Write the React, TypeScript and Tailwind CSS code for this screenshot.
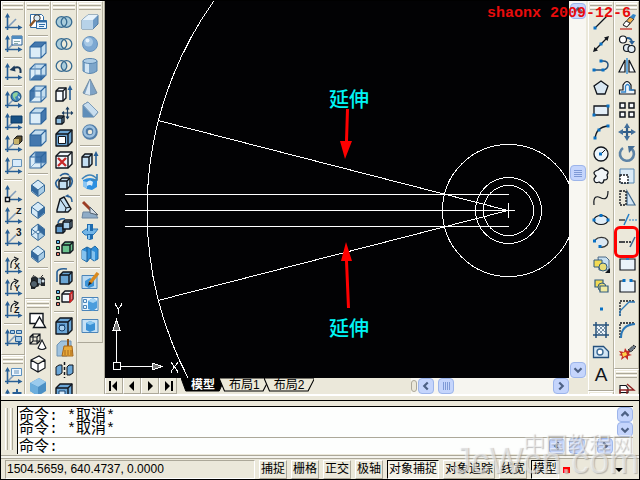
import React from "react";

type Item = [string, React.ReactNode, boolean?] | "sep";

const NAVY = "#285f96";
const INK = "#10151c";
const SKY = "#c4dff2";

function Svg({ children }: { children: React.ReactNode }) {
  return (
    <svg viewBox="0 0 20 20" className="block h-5 w-5 shrink-0" fill="none" aria-hidden="true">
      {children}
    </svg>
  );
}

function Ucs({ children, diag = true }: { children?: React.ReactNode; diag?: boolean }) {
  return (
    <Svg>
      {diag && <path d="M5 15l8-8" stroke="#7f9cbb" strokeWidth="1.6" />}
      <path d="M4.5 3v15M2 15.5h14" stroke={NAVY} strokeWidth="1.6" />
      <path d="M4.5 1L2 5.5h5zM19.500 15.500L15 13v5z" fill={NAVY} />
      {children}
    </Svg>
  );
}

const FACES: Record<string, string> = {
  top: "2,7 7,2 18,2 13,7",
  bottom: "2,18 7,13 18,13 13,18",
  left: "2,7 7,2 7,13 2,18",
  right: "13,7 18,2 18,13 13,18",
  front: "2,7 13,7 13,18 2,18",
  back: "7,2 18,2 18,13 7,13",
};

function ViewCube({ face }: { face: string }) {
  return (
    <Svg>
      <path d="M2 7l5-5h11v11l-5 5H2z" fill="#c3ddef" />
      <path d="M2 7h11v11H2z" fill="#dcedf8" />
      <polygon points={FACES[face]} fill="#4478ae" />
      <path d="M2 7l5-5h11v11l-5 5H2zM2 7h11v11M13 7l5-5" stroke="#2e669e" strokeWidth="1.1" />
      {(face === "bottom" || face === "left" || face === "back") && (
        <path d="M7 2v11h11M7 13l-5 5" stroke="#6d9bc4" strokeWidth="0.8" />
      )}
    </Svg>
  );
}

const ISO: Record<string, string> = {
  sw: "4,7 10,12 10,18 4,13",
  se: "16,7 10,12 10,18 16,13",
  ne: "10,2 16,7 16,13 10,8",
  nw: "4,7 10,12 10,18 4,13",
};

function IsoCube({ face }: { face: string }) {
  return (
    <Svg>
      <path d="M10 2l6.500 5v6.500L10 18.500l-6.500-5V7z" fill="#d6eaf7" />
      <path d="M10 12l6.500-5v6.500L10 18.500z" fill="#a8cce6" />
      <polygon points={ISO[face]} fill="#33699f" />
      <path d="M10 2l6.500 5v6.500L10 18.500l-6.500-5V7zM3.500 7l6.500 5 6.500-5M10 12v6" stroke="#386b99" strokeWidth="1" />
      {face === "ne" ? <path d="M10 2v6l-6 5M10 8l6 5" stroke="#386b99" strokeWidth="0.8" /> : null}
    </Svg>
  );
}

function Rings({ mode }: { mode: "union" | "minus" | "cross" }) {
  return (
    <Svg>
      <circle cx="7.500" cy="10" r="5.300" fill={mode === "cross" ? "none" : "#a9ccdb"} />
      <circle cx="12.500" cy="10" r="5.300" fill={mode === "union" ? "#a9ccdb" : mode === "minus" ? "#ece9d8" : "none"} />
      {mode === "cross" && <path d="M10 5.500a5.300 5.300 0 0 1 0 9a5.300 5.300 0 0 1 0-9z" fill="#a9ccdb" />}
      <circle cx="7.500" cy="10" r="5.300" stroke="#376b91" strokeWidth="1.300" />
      <circle cx="12.500" cy="10" r="5.300" stroke="#376b91" strokeWidth="1.300" />
    </Svg>
  );
}

function Box({ x = 2, y = 4, s = 9, fill = SKY }: { x?: number; y?: number; s?: number; fill?: string }) {
  const d = Math.round(s / 3);
  return (
    <g stroke={INK} strokeWidth="1.400" strokeLinejoin="round">
      <path d={`M${x} ${y + d}l${d} -${d}h${s}v${s}l-${d} ${d}h-${s}z`} fill={fill} />
      <path d={`M${x} ${y + d}h${s}v${s}M${x + s} ${y + d}l${d} -${d}`} />
    </g>
  );
}

function Dots({ pts }: { pts: number[][] }) {
  return (
    <>
      {pts.map(([x, y]) => (
        <rect key={`${x}-${y}`} x={x - 1.5} y={y - 1.5} width="3" height="3" fill="#0870c4" />
      ))}
    </>
  );
}

function Glyph({ t, x = 12, y = 9, s = 9 }: { t: string; x?: number; y?: number; s?: number }) {
  return (
    <text x={x} y={y} fontSize={s} fontWeight="700" fill={INK} fontFamily="Liberation Sans, sans-serif">
      {t}
    </text>
  );
}

const turn = <path d="M8 12Q7 4 13 3M11 1l4 2-3 3" stroke={INK} strokeWidth="1.200" />;

const ucsItems: Item[] = [
  ["UCS", <Ucs />],
  ["Display UCS", <Ucs><path d="M9 2h10v9H9z" fill="#f5faff" stroke={NAVY} /><path d="M9 2h10v3H9z" fill="#4f8bc0" /><path d="M11 7.500h6M11 9.500h4" stroke="#8aa" /></Ucs>],
  "sep",
  ["UCS previous", <Ucs diag={false}><path d="M17.500 11q1-8-7-5" stroke="#1c3a5a" strokeWidth="2" /><path d="M6.500 8l5-4.500 1 6z" fill="#1c3a5a" /></Ucs>],
  "sep",
  ["World UCS", <Ucs><circle cx="13" cy="6.500" r="5" fill="#3f83bb" stroke="#16466e" /><path d="M10 4q3-3 5-1l-1 3-2 1 1 3q-4-2-3-6z" fill="#8ed09a" /><path d="M15 6l2 1-1 2z" fill="#fff" /></Ucs>],
  ["Object UCS", <Ucs><path d="M8 4h11v7H8z" fill="#185184" stroke="#0b3a66" /></Ucs>],
  ["Face UCS", <Ucs><path d="M11 5l3-3h5v5l-3 3h-5z" fill="#5d4e29" stroke={INK} /><path d="M11 5h5v5h-5z" fill="#c9b36b" /></Ucs>],
  ["View UCS", <Ucs><path d="M9.500 3.500h9v7h-9z" fill="#d7ebfa" stroke="#6693ba" /></Ucs>],
  "sep",
  ["Origin UCS", <Ucs><path d="M2.500 13.500h4v4h-4z" fill="#fff" stroke={INK} strokeWidth="1.400" /></Ucs>],
  ["Z axis vector UCS", <Ucs><Glyph t="Z" x={13} y={8} /></Ucs>],
  ["3 point UCS", <Ucs><Glyph t="3" x={13} y={8} s={10} /></Ucs>],
  "sep",
  ["Rotate X", <Ucs diag={false}>{turn}<Glyph t="X" x={11} y={13} /></Ucs>],
  ["Rotate Y", <Ucs diag={false}>{turn}<Glyph t="Y" x={11} y={13} /></Ucs>],
  ["Rotate Z", <Ucs diag={false}>{turn}<Glyph t="Z" x={11} y={13} /></Ucs>],
  "sep",
  ["Apply UCS", <Ucs><path d="M7.500 2.500h4v3h-4zM13.500 2.500h5v3h-5zM12.500 8.500h6v5h-6z" fill="#a9cdea" stroke={NAVY} /></Ucs>],
];

const ucs2Items: Item[] = [
  ["UCS dialog", <Ucs><path d="M8.500 2.500h10v7h-10z" fill="#eef7ff" stroke="#5c91c1" /><path d="M11 5h5M11 7h5" stroke="#6693ba" /></Ucs>],
  ["Move UCS", <Ucs><path d="M14 1v9M9.500 5h9" stroke={NAVY} strokeWidth="2" /></Ucs>],
];

const viewItems: Item[] = [
  ["Named views", <Svg><path d="M2.500 2.500h11l2 2v11h-13z" fill="#fff" stroke="#2c6aa5" /><path d="M8.500 8.500h10v8h-10z" fill="#eaf5ff" stroke="#2c6aa5" /><path d="M8.500 8.500h10v2h-10z" fill="#2c6aa5" /><path d="M11 12.500h6M11 14.500h5" stroke="#2c6aa5" /><circle cx="9" cy="6" r="3.200" fill="#dbe9f2" stroke="#333" /><path d="M7 8l-5 6" stroke="#8b5426" strokeWidth="2.400" /></Svg>],
  "sep",
  ["Top view", <ViewCube face="top" />],
  ["Bottom view", <ViewCube face="bottom" />],
  ["Left view", <ViewCube face="left" />],
  ["Right view", <ViewCube face="right" />],
  ["Front view", <ViewCube face="front" />],
  ["Back view", <ViewCube face="back" />],
  "sep",
  ["SW isometric", <IsoCube face="sw" />],
  ["SE isometric", <IsoCube face="se" />],
  ["NE isometric", <IsoCube face="ne" />],
  ["NW isometric", <IsoCube face="nw" />],
  "sep",
  ["Camera", <Svg><path d="M3 6l4-2 3 2 5-1 2 2v7h-4l-1-2-2 3-2-1-1 3H3z" fill="#22282e" /><circle cx="6" cy="12" r="3.500" fill="#51616c" stroke="#111" /><path d="M10 6l3 1v5l-3-1z" fill="#9eb4c3" /><circle cx="15" cy="9" r="1.500" fill="#d5e3ec" /><path d="M4 6l2-3M13 5l2-2" stroke="#333" /></Svg>],
];

const shadeItems: Item[] = [
  ["2D wireframe", <Svg><path d="M2 3.500h13v10H2z" fill="#fff" stroke={INK} strokeWidth="1.400" /><path d="M11.500 7l6 10.500h-12z" fill="#fff" stroke={INK} strokeWidth="1.400" /></Svg>],
  ["3D wireframe", <Svg><path d="M2 5l3-3h7v7l-3 3H2zM2 5h7v7M9 5l3-3M5 2v7l-3 3M5 9h7" stroke={INK} strokeWidth="1.100" /><path d="M14 8l4 8q-4 3-8 0z" fill="#fff" stroke={INK} strokeWidth="1.100" /></Svg>],
  ["Hidden", <Svg><path d="M3 6l8-4 6 4v8l-7 4-7-4zM3 6l7 4 7-4M10 10v8" fill="#fff" stroke={INK} strokeWidth="1.200" /></Svg>],
  ["Shaded", <Svg><path d="M2 7l9-5 7 4v9l-8 5-8-5z" fill="#4b8fc4" /><path d="M2 7l9-5 7 4-8 5z" fill="#9bcbed" /><path d="M2 7l8 4v9l-8-5z" fill="#6daedc" /></Svg>],
];

const rotateArrows = <path d="M5 7q-6 3-1 9M15 4q6 4 1 11M6 4q4-4 9-1" stroke={NAVY} strokeWidth="1.700" />;
const rgb = <g stroke={INK}><path d="M2.500 2.500h3v3h-3z" fill="#51b6f5" /><path d="M2.500 8.500h3v3h-3z" fill="#4cd288" /><path d="M2.500 14.500h3v3h-3z" fill="#e9806e" /></g>;

const solidEditItems: Item[] = [
  ["Union", <Rings mode="union" />],
  ["Subtract", <Rings mode="minus" />],
  ["Intersect", <Rings mode="cross" />],
  "sep",
  ["Extrude faces", <Svg><path d="M2 7l3-3h7v10l-3 3H2z" fill="#f7fbff" stroke={INK} strokeWidth="1.400" /><path d="M2 7h7v10M9 7l3-3" stroke={INK} strokeWidth="1.400" /><path d="M16 16V5" stroke={NAVY} strokeWidth="1.600" /><path d="M16 1l-2.500 5h5z" fill={NAVY} /></Svg>],
  ["Move faces", <Svg><Box x={2} y={10} s={6} fill="#8fc0e4" /><path d="M13.500 2v10M8.500 7h10M12 3.500l1.500-2 1.500 2M12 10.500l1.500 2 1.500-2M10 5.500L8.500 7 10 8.500M17 5.500L18.500 7 17 8.500" stroke="#1b3d61" strokeWidth="1.200" /></Svg>],
  ["Offset faces", <Svg><Box x={2} y={2} s={12} fill="#6ba4d2" /><path d="M4.500 8.500h7v7h-7z" fill="#fff" stroke={INK} /></Svg>],
  ["Delete faces", <Svg><Box x={2} y={2} s={12} fill="#eef6fb" /><path d="M4 8l8 8M12 8l-8 8" stroke="#c62828" strokeWidth="2.300" /></Svg>],
  ["Rotate faces", <Svg><Box x={5} y={6} s={8} />{rotateArrows}</Svg>],
  ["Taper faces", <Svg><path d="M3 16l3-11 4-2 7 12-3 3H3z" fill={SKY} stroke={INK} strokeWidth="1.400" /><path d="M6 5l6 9-1 4M12 14l4-1" stroke={INK} /><path d="M13 2q5 0 5 6M15.500 3l-3-1 2-1" stroke={NAVY} strokeWidth="1.500" /></Svg>],
  ["Copy faces", <Svg><Box x={2} y={8} s={7} fill="#5d99cb" /><Box x={9} y={4} s={7} fill="#a8cfeb" /><path d="M4 7q1-5 7-4" stroke={NAVY} strokeWidth="1.500" /></Svg>],
  ["Color faces", <Svg>{rgb}<Box x={8} y={4} s={8} fill="#6bc28d" /></Svg>],
  "sep",
  ["Copy edges", <Svg><Box x={6} y={6} s={9} fill="#6aa5d4" /><path d="M3 16V6q1-4 10-3" stroke={NAVY} strokeWidth="1.600" /></Svg>],
  ["Color edges", <Svg>{rgb}<Box x={8} y={3} s={8} fill="#f1f6fa" /><path d="M16 6v8l2-2V4z" stroke="#e02020" strokeWidth="1.200" /></Svg>],
  "sep",
  ["Imprint", <Svg><Box x={2} y={2} s={12} fill="#6ba7d8" /><circle cx="8" cy="12" r="3" fill="#a8d0ee" stroke="#173f6b" /><path d="M5 9l6 0" stroke="#173f6b" /></Svg>],
  ["Clean", <Svg><path d="M3 7l4-4h10v11l-4 4H3z" fill="#9fc2de" stroke="#6d92b4" /><path d="M14 1v7" stroke="#8c5721" strokeWidth="2" /><path d="M10 8h8l1 10H8z" fill="#e8a93a" stroke="#a5661b" /><path d="M11 12v5M14 12v5M17 12v5" stroke="#a5661b" /></Svg>],
  ["Separate", <Svg><path d="M2 7l3-2 3 0v8l-3 2H2zM13 7l2-2h4v8l-3 2h-3z" fill="#6ba7d8" stroke={INK} /><path d="M10.500 2v16" stroke={INK} strokeDasharray="3 2" strokeWidth="1.500" /></Svg>],
  ["Shell", <Svg><Box x={2} y={2} s={12} fill="#6ba7d8" /><path d="M5 9h6v6H5z" fill="#d8ecfa" stroke="#173f6b" /></Svg>],
];

const solidItems: Item[] = [
  ["Box", <Svg><path d="M2 8l6-5h10v9l-5 5H2z" fill="#6e9bc6" stroke="#537da5" /><path d="M2 8l6-5h10l-5 5z" fill="#e7f2fa" /><path d="M2 8h11v9H2z" fill="#b7d2e8" /></Svg>],
  ["Sphere", <Svg><circle cx="10" cy="10" r="7.500" fill="#7da8d2" stroke="#6792bb" /><circle cx="8.500" cy="8" r="4.500" fill="#a7c8e5" /><circle cx="7.500" cy="6.500" r="2" fill="#e5f1fb" /></Svg>],
  ["Cylinder", <Svg><path d="M3 5v10q7 5 14 0V5z" fill="#7da6cb" stroke="#5b87b0" /><path d="M5 6v10l4 1V6z" fill="#d2e5f4" /><ellipse cx="10" cy="5" rx="7" ry="2.500" fill="#aecde6" stroke="#5b87b0" /></Svg>],
  ["Cone", <Svg><path d="M10 1l7 14q-7 4-14 0z" fill="#7fa3c6" stroke="#708ba3" /><path d="M10 2L5 16l5 1z" fill="#dbe9f4" /></Svg>],
  ["Wedge", <Svg><path d="M3 5l5-3 10 10-4 5H3z" fill="#7fa3c4" stroke="#5a7fa1" /><path d="M3 6v11h11z" fill="#5f8eb9" /><path d="M3 5l5-3 10 10-4 5z" fill="#c8ddee" stroke="#7d9cb8" /></Svg>],
  ["Torus", <Svg><circle cx="10" cy="10" r="5" stroke="#517da8" strokeWidth="5.500" /><circle cx="9.500" cy="9.500" r="5" stroke="#9cc0df" strokeWidth="2.500" /></Svg>],
  "sep",
  ["Extrude", <Svg><path d="M2 7l3-3h7v10l-3 3H2z" fill={SKY} stroke={INK} strokeWidth="1.400" /><path d="M2 7h7v10M9 7l3-3" stroke={INK} strokeWidth="1.400" /><path d="M16 16V5" stroke={NAVY} strokeWidth="1.600" /><path d="M16 1l-2.500 5h5z" fill={NAVY} /></Svg>],
  ["Revolve", <Svg><path d="M3 8q7-4 14 0v7l-5 3-5-1-4-3z" fill="#2c8fe0" /><path d="M3 9l4 1v7l-4-3z" fill="#8cc6f2" /><path d="M7 10q3-3 6 0l-1 4q-2-2-5 0z" fill="#d4eafa" /><path d="M2 7q8-8 15 0M17 2v6h-6" stroke="#3d82b8" strokeWidth="1.700" /></Svg>],
  "sep",
  ["Slice", <Svg><path d="M3 12h11l4 6H2z" fill="#8facc7" stroke="#6a849f" /><path d="M3 2l8 8" stroke="#9b3d24" strokeWidth="3" /><path d="M10 7l8 8-8-2z" fill="#d6dee6" stroke="#53616e" /></Svg>],
  ["Section", <Svg><path d="M2 10l4-3h12l-3 4-2 2H5z" fill="#74b5e6" stroke="#2d78b4" /><path d="M7 2h6v7H7zM7 12h6v5l-3 1-3-1z" fill="#1f6caf" /><path d="M8 3h2v6H8zM8 13h2v4H8z" fill="#86c6f3" /></Svg>],
  ["Interfere", <Svg><path d="M2 6l5-3 4 2 4-3 3 3v10l-4 2-4-3-3 4-5-3z" fill="#2f8ed8" stroke="#246ba4" /><path d="M2 6l5 2v9l-5-2zM11 6l4 2v9l-4-3z" fill="#83c2ef" /><path d="M7 3v14M11 5v9" stroke="#1c5d94" /></Svg>],
  "sep",
  ["Setup drawing", <Svg><path d="M2 3.500h15v13H2z" fill="#b9d9f1" stroke="#4b84b8" /><path d="M5 9l5-3 4 2v6l-5 2-4-2z" fill="#3a93d7" /><path d="M18 1l-8 10" stroke="#d98a1f" strokeWidth="3.500" /><path d="M9 10l3 1-4 3z" fill="#222" /></Svg>],
  ["Setup view", <Svg><path d="M2 3.500h16v13H2z" fill="#eaf5fd" stroke="#4b84b8" /><path d="M3.500 5.500h3v3h-3zM3.500 11.500h3v3h-3z" stroke="#4b84b8" /><path d="M8 7l5-3 4 3v7l-4 3-5-2z" fill="#4b9ddd" /><path d="M8 7l5 2 4-2-4-3z" fill="#a8d5f4" /></Svg>],
  ["Setup profile", <Svg><path d="M2 3.500h16v13H2z" fill="#c6e1f5" stroke="#4b84b8" /><path d="M6 7l4-2 5 2v7l-5 2-4-2z" fill="#3b91d5" /><path d="M6 7l4-2 5 2-5 2z" fill="#8cc9f2" /></Svg>],
];

const drawItems: Item[] = [
  ["Line", <Svg><path d="M4 16L17 3" stroke={INK} strokeWidth="1.300" /><Dots pts={[[4, 16]]} /></Svg>],
  ["Construction line", <Svg><path d="M4 16L16 4" stroke={INK} strokeWidth="1.200" /><path d="M2 18l1.500-5L7 16.500zM18 2l-5 1.500L16.500 7z" fill={INK} /><Dots pts={[[10, 10]]} /></Svg>],
  ["Polyline", <Svg><path d="M3 14h9M10 5h2q5 0 5 4t-5 5" stroke="#24507c" strokeWidth="1.500" /><Dots pts={[[3, 14], [12, 14], [10, 5]]} /></Svg>],
  ["Polygon", <Svg><path d="M10 3l7 5-3 8H6L3 8z" fill="#d9e8f3" stroke={INK} strokeWidth="1.300" /></Svg>],
  ["Rectangle", <Svg><path d="M3 6h14v9H3z" fill="#e4eff8" stroke={INK} strokeWidth="1.300" /><Dots pts={[[3, 15], [17, 6]]} /></Svg>],
  ["Arc", <Svg><path d="M4 17Q5 5 17 4" stroke={INK} strokeWidth="1.300" /><Dots pts={[[4, 16], [8, 8], [17, 4]]} /></Svg>],
  ["Circle", <Svg><circle cx="10" cy="10" r="7" fill="#edf5fb" stroke={INK} strokeWidth="1.300" /><path d="M10 10l4-4" stroke={INK} /><Dots pts={[[9.5, 10]]} /></Svg>],
  ["Revision cloud", <Svg><path d="M7 4q4-4 7 0 5 1 2 5 2 5-3 5-1 5-5 2-5 2-5-3 1-2 2-3-5-4 2-6z" fill="#f1f5f8" stroke={INK} strokeWidth="1.300" /></Svg>],
  ["Spline", <Svg><path d="M3 17C2 8 6 8 9 9.500S17 13 17 3" stroke={INK} strokeWidth="1.200" /></Svg>],
  ["Ellipse", <Svg><ellipse cx="10" cy="10" rx="7" ry="4.500" fill="#e0eef8" stroke={INK} strokeWidth="1.200" /><Dots pts={[[3, 10], [17, 10], [10, 5.5]]} /></Svg>],
  ["Ellipse arc", <Svg><path d="M4 8q4-4 10-2 5 3 2 7-3 3-7 2" fill="#dbe8f3" stroke="#333" strokeWidth="1.300" /><Dots pts={[[3.5, 9], [9, 14.5]]} /></Svg>],
  ["Insert block", <Svg><path d="M7 3h8l3 3v10H8z" fill="#c7dff1" stroke="#4c6a86" /><path d="M3 6h8v7H3z" fill="#f3db53" stroke="#315c7f" /><circle cx="12" cy="13" r="4" fill="#e8dc76" stroke="#315c7f" /><path d="M19 19v-5l-5 5z" fill={INK} /></Svg>],
  ["Make block", <Svg><path d="M4 4h8v7H4z" fill="#f3db53" stroke="#315c7f" strokeWidth="1.200" /><circle cx="11" cy="11" r="4" fill="#e8dc76" stroke="#315c7f" /><path d="M9 10h8v6H9z" fill="#f0e9a0" stroke="#315c7f" strokeWidth="1.200" /></Svg>],
  ["Point", <Svg><Dots pts={[[10.5, 11]]} /></Svg>],
  ["Hatch", <Svg><path d="M5 2v16M15 2v16M2 5h16M2 15h16" stroke="#24507c" strokeWidth="1.500" /><path d="M6 6h8v8H6z" fill="#eef5fb" /><path d="M6 8l6 6M6 12l2 2M8 6l6 6M12 6l2 2M14 8l-6 6M12 6l-6 6" stroke="#54738f" strokeWidth="0.800" /></Svg>],
  ["Region", <Svg><path d="M2.500 15.500v-11h10l5 5v6z" fill="#d2e5f4" stroke="#24507c" strokeWidth="1.300" /><circle cx="9" cy="10" r="3" fill="#fff" stroke="#3c6b95" strokeWidth="1.400" /></Svg>],
  ["Multiline text", <Svg><text x="10" y="17" textAnchor="middle" fontSize="19" fill={INK} fontFamily="Liberation Sans, sans-serif">A</text></Svg>],
];

const modifyItems: Item[] = [
  ["Erase", <Svg><path d="M6 13l7-8 4 2-7 8z" fill="#f4b04d" stroke="#333" /><path d="M6 13l3-4 4 2-3 4z" fill="#fff" stroke="#333" /><path d="M3 17h12" stroke="#c53028" strokeWidth="1.300" /><path d="M13 5l3-3 3 1-2 4z" fill="#3485c6" /></Svg>],
  ["Copy", <Svg><circle cx="6" cy="5.500" r="3.500" fill="#fff" stroke={INK} strokeWidth="1.200" /><circle cx="10" cy="14" r="3.500" fill="#e2edf5" stroke={INK} strokeWidth="1.200" /><circle cx="14.500" cy="15" r="3.500" fill="#e2edf5" stroke={INK} strokeWidth="1.200" /><path d="M10 4q5 0 5 5" stroke={NAVY} strokeWidth="1.800" /><path d="M12 7h6l-3 4z" fill={NAVY} /></Svg>],
  ["Mirror", <Svg><path d="M8 4v12H2zM12 4v12h6z" fill="#f7fafc" stroke={INK} strokeWidth="1.200" /><path d="M10 2v16" stroke="#2e8ed8" strokeWidth="1.400" /></Svg>],
  ["Offset", <Svg><path d="M2.500 16v-4H6V7q4-7 8 0v5h4v4z" fill="#eef5fa" stroke={INK} strokeWidth="1.200" /><path d="M4 14h4.500V8q2-3 4 0v4H17" stroke="#3385ca" strokeWidth="1.300" /></Svg>],
  ["Array", <Svg><path d="M3 3h5v5H3zM12 3h5v5h-5zM3 12h5v5H3zM12 12h5v5h-5z" fill="#f6f9fc" stroke={INK} strokeWidth="1.500" /></Svg>],
  ["Move", <Svg><path d="M10 4v12M4 10h12" stroke="#315d88" strokeWidth="2.200" /><path d="M10 1l3 5H7zM10 19l3-5H7zM1 10l5-3v6zM19 10l-5-3v6z" fill="#426f9b" /></Svg>],
  ["Rotate", <Svg><path d="M6 4a7 7 0 1 0 9 1" stroke="#5d83a6" strokeWidth="2.600" /><path d="M11 2h7l-6 7z" fill="#456e96" /></Svg>],
  ["Scale", <Svg><path d="M3 3h14v14H3z" fill="#dcebf6" stroke="#5888b1" /><path d="M3 9h8v8H3z" fill="#fff" stroke={INK} strokeDasharray="2 1" strokeWidth="1.300" /></Svg>],
  ["Stretch", <Svg><path d="M10 3l8 14h-8z" fill="#d4e7f5" stroke="#40698e" strokeWidth="1.200" /><path d="M3 3h6v14H3z" stroke={INK} strokeDasharray="2 1" strokeWidth="1.300" /></Svg>],
  ["Trim", <Svg><path d="M2 10h6" stroke={INK} strokeWidth="1.200" /><path d="M12 10h2M15 10h2M18 10h2" stroke="#247fc9" strokeWidth="1.200" /><path d="M7 15l5-11" stroke="#247fc9" strokeWidth="1.500" /></Svg>],
  ["Extend", <Svg><path d="M2 10h6M9 10h2M12 10h2" stroke={INK} strokeWidth="1.300" /><path d="M13 15l5-10" stroke="#416b93" strokeWidth="1.500" /></Svg>, true],
  ["Break at point", <Svg><path d="M3 5h15v11H3z" fill="#eaf3fa" stroke={INK} strokeWidth="1.200" /><path d="M9 3h3v3H9z" fill="#247fc9" /></Svg>],
  ["Break", <Svg><path d="M6 5H3v11h15V5h-3" fill="#eaf3fa" stroke={INK} strokeWidth="1.200" /><Dots pts={[[7, 4.5], [14, 4.5]]} /></Svg>],
  ["Chamfer", <Svg><path d="M3 18V3h15" stroke={INK} strokeDasharray="2 1" strokeWidth="1.300" /><path d="M3 18v-5l9-9h6" stroke="#2b78b8" strokeWidth="1.300" /></Svg>],
  ["Fillet", <Svg><path d="M3 18V3h15" stroke={INK} strokeDasharray="2 1" strokeWidth="1.300" /><path d="M4 18Q4 5 18 4" stroke="#2b78b8" strokeWidth="2" /></Svg>],
  ["Explode", <Svg><path d="M2 9l5 1 1-4 2 3 4-2-2 5 3 1-4 1 0 4-3-3-4 3 1-4-3-1 2-1z" fill="#c52b25" /><path d="M5 11l4-1 1 3-4 2z" fill="#ffd248" /><path d="M11 8l6-5 2 2-5 5z" fill="#6c7885" stroke="#222" strokeDasharray="2 1" /></Svg>],
];

const propItems: Item[] = [
  ["Properties", <Svg><path d="M3 5.500h6l2 3v4H3z" fill="#fff" stroke={INK} strokeWidth="1.200" /><path d="M10 4l7 6H3v8M10 10v7" stroke="#8d2020" strokeWidth="1.300" /></Svg>],
];

function Toolbar({ label, items, open = false }: { label: string; items: Item[]; open?: boolean }) {
  return (
    <div
      role="toolbar"
      aria-label={label}
      className={`shrink-0 border-l border-t border-r border-l-white border-t-white border-r-[#b5b1a0] ${open ? "" : "border-b border-b-[#aca899] pb-[5px]"}`}
    >
      <div className="mx-px flex h-[9px] flex-col gap-px pt-px">
        <div className="h-[3px] border-b border-t border-b-[#aca899] border-t-white" />
        <div className="h-[3px] border-b border-t border-b-[#aca899] border-t-white" />
      </div>
      {items.map((it, i) =>
        it === "sep" ? (
          <div key={i} className="mx-0.5 flex h-1.5 items-center">
            <div className="h-0.5 w-full border-b border-t border-b-white border-t-[#aca899]" />
          </div>
        ) : (
          <button key={i} type="button" aria-label={it[0]} title={it[0]} className="relative flex h-[22px] w-full items-center justify-center">
            {it[1]}
            {it[2] && <span className="absolute -inset-x-px -inset-y-[5px] z-10 rounded-md border-[3px] border-[#f00]" />}
          </button>
        ),
      )}
    </div>
  );
}

function Dock({ children }: { children: React.ReactNode }) {
  return <div className="flex w-[26px] shrink-0 flex-col overflow-hidden first:w-6 last:w-[25px]">{children}</div>;
}

function ScrollButton({ dir, className = "h-4 w-4" }: { dir: "up" | "down" | "left" | "right"; className?: string }) {
  const d = { up: "M4 9l4-4 4 4", down: "M4 6l4 4 4-4", left: "M10 4L6 8l4 4", right: "M6 4l4 4-4 4" }[dir];
  return (
    <button
      type="button"
      aria-label={`Scroll ${dir}`}
      className={`flex shrink-0 items-center justify-center rounded-sm border border-[#9db5ea] bg-[#c5d5fc] ${className}`}
    >
      <svg viewBox="0 0 16 16" className="h-3.5 w-3.5" fill="none" aria-hidden="true">
        <path d={d} stroke="#4d6185" strokeWidth="2.500" />
      </svg>
    </button>
  );
}

function Drawing() {
  return (
    <svg viewBox="105 1 464 377" preserveAspectRatio="xMinYMin slice" className="absolute inset-0 h-full w-full" fill="none" role="img" aria-label="Drawing">
      <g stroke="#fff" strokeWidth="1" shapeRendering="crispEdges">
        <circle cx="508.500" cy="210.500" r="361.500" />
        <circle cx="508.500" cy="210.500" r="66" />
        <circle cx="508.500" cy="210.500" r="33" />
        <circle cx="508.500" cy="210.500" r="25" />
        <path d="M125 194.500h384M125 210.500h390M125 226.500h384M508.500 203v15" />
        <path d="M158 120.500l350 90-350 90" />
        <path d="M113.500 362.500h7v7h-7zM116.500 362v-32M121 366.500h31" />
        <path d="M116.500 320l-3.500 10h7zM162 366.500l-10-3.500v7z" fill="#777" />
        <path d="M115.500 303v2l3 4 3-4v-2M118.500 309v5M171.500 362v1l6 8v2M177.500 362v1l-6 8v2" />
      </g>
      <path d="M346 109h3l-1 32h4l-7 18-5-18h5zM347 308h3l-2-47h4l-6-19-5 19h4z" fill="#f00" />
      <g fill="#00f5f5" fontSize="20" fontWeight="500" fontFamily="Liberation Sans, Noto Sans CJK SC, sans-serif">
        <text x="329" y="107">延伸</text>
        <text x="329" y="336">延伸</text>
      </g>
    </svg>
  );
}

function NavButton({ label, d }: { label: string; d: string }) {
  return (
    <button type="button" aria-label={label} className="flex h-full w-[18px] items-center justify-center border-b border-l border-r border-b-[#aca899] border-l-white border-r-[#aca899]">
      <svg viewBox="0 0 12 12" className="h-3 w-3" aria-hidden="true">
        <path d={d} fill="#000" />
      </svg>
    </button>
  );
}

function LayoutTab({ label, active = false }: { label: string; active?: boolean }) {
  return (
    <button type="button" className="relative -mr-1.5 h-full px-2.5 text-[12px] leading-3">
      <svg viewBox="0 0 46 14" preserveAspectRatio="none" className="absolute inset-0 h-full w-full" aria-hidden="true">
        <path d="M0 0l5 13h35l6-13z" fill={active ? "#000" : "#ece9d8"} stroke="#000" strokeWidth="1" />
      </svg>
      <span className={`relative ${active ? "font-bold text-white" : "text-black"}`}>{label}</span>
    </button>
  );
}

const statusToggles: { label: string; on?: boolean }[] = [
  { label: "捕捉" },
  { label: "栅格" },
  { label: "正交" },
  { label: "极轴" },
  { label: "对象捕捉", on: true },
  { label: "对象追踪" },
  { label: "线宽" },
  { label: "模型", on: true },
];

export default function App() {
  return (
    <div className="relative flex h-screen w-full flex-col overflow-hidden border border-black bg-[#ebe8da] font-['Liberation_Sans','Noto_Sans_CJK_SC',sans-serif] text-black">
      <main className="flex min-h-0 flex-1">
        <div className="flex">
          <Dock>
            <Toolbar label="UCS" items={ucsItems} />
            <Toolbar label="UCS II" items={ucs2Items} open />
          </Dock>
          <Dock>
            <Toolbar label="View" items={viewItems} />
            <Toolbar label="Shade" items={shadeItems} open />
          </Dock>
          <div className="w-[26px] shrink-0 overflow-hidden">
            <Toolbar label="Solids editing" items={solidEditItems} open />
          </div>
          <div className="w-[26px] shrink-0 overflow-hidden">
            <Toolbar label="Solids" items={solidItems} />
          </div>
        </div>

        <div className="ml-px flex min-w-0 flex-1 border-l border-[#aca899]">
          <div className="flex min-w-0 flex-1 flex-col">
            <div className="relative min-h-0 flex-1 overflow-hidden bg-[#020204]">
              <Drawing />
            </div>
            <div className="flex h-4 shrink-0">
              <NavButton label="First layout" d="M1 1h2v10H1zM9 1v10L4 6z" />
              <NavButton label="Previous layout" d="M8 1v10L3 6z" />
              <NavButton label="Next layout" d="M4 1v10l5-5z" />
              <NavButton label="Last layout" d="M9 1h2v10H9zM3 1v10l5-5z" />
              <div className="ml-1 flex h-3.5 flex-1">
                <LayoutTab label="模型" active />
                <LayoutTab label="布局1" />
                <LayoutTab label="布局2" />
              </div>
              <div className="flex w-[158px] items-center bg-[#f6f5f0]">
                <div className="mr-px h-3 w-1.5 rounded-sm border border-[#aca899] bg-[#ebe8da]" />
                <ScrollButton dir="left" />
                <div className="ml-1 flex h-4 w-4 items-center justify-center gap-px rounded-sm border border-[#9db5ea] bg-[#c5d5fc]">
                  <i className="h-2 w-px bg-[#7f9ad6]" />
                  <i className="h-2 w-px bg-[#7f9ad6]" />
                  <i className="h-2 w-px bg-[#7f9ad6]" />
                  <i className="h-2 w-px bg-[#7f9ad6]" />
                </div>
                <div className="flex-1" />
                <ScrollButton dir="right" />
              </div>
            </div>
          </div>
          <div className="mb-4 flex w-[17px] shrink-0 flex-col items-center bg-[#f8f7f2]">
            <ScrollButton dir="up" className="mt-0.5 h-4 w-4" />
            <div className="flex-[146]" />
            <div className="flex h-4 w-4 flex-col items-center justify-center gap-px rounded-sm border border-[#9db5ea] bg-[#c5d5fc]">
              <i className="h-px w-2 bg-[#7f9ad6]" />
              <i className="h-px w-2 bg-[#7f9ad6]" />
              <i className="h-px w-2 bg-[#7f9ad6]" />
              <i className="h-px w-2 bg-[#7f9ad6]" />
            </div>
            <div className="flex-[180]" />
            <ScrollButton dir="down" />
          </div>
        </div>

        <div className="ml-0.5 flex">
          <div className="w-[26px] shrink-0 overflow-hidden">
            <Toolbar label="Draw" items={drawItems} />
            <Toolbar label="Draw order" items={[]} open />
          </div>
          <Dock>
            <Toolbar label="Modify" items={modifyItems} />
            <Toolbar label="Properties" items={propItems} open />
          </Dock>
        </div>
      </main>

      <div className="h-[7px] shrink-0 border-b border-t-2 border-b-black border-t-white" />

      <section aria-label="Command line" className="flex shrink-0 pl-1 pr-1.5 pt-[5px]">
        <div className="mb-1 mr-0.5 mt-0.5 flex w-2.5 gap-0.5">
          <div className="w-[3px] border-l border-r border-l-white border-r-[#aca899]" />
          <div className="w-[3px] border-l border-r border-l-white border-r-[#aca899]" />
        </div>
        <div className="min-w-0 flex-1 border-l border-t border-black bg-[#fdfefd] font-['Liberation_Mono','Noto_Sans_CJK_SC',monospace] text-[15px]">
          <div className="flex h-[31px] border-b border-[#aca899]">
            <div className="flex-1 pl-px pt-[3px]">
              <p className="h-[13px] whitespace-pre leading-[13px]">命令: *取消*</p>
              <p className="h-[13px] whitespace-pre leading-[13px]">命令: *取消*</p>
            </div>
            <div className="flex flex-col">
              <ScrollButton dir="up" className="h-[15px] w-4" />
              <ScrollButton dir="down" className="h-[15px] w-4" />
            </div>
          </div>
          <div className="flex h-4 items-center">
            <label htmlFor="command" className="pl-px pt-1 leading-4">命令:</label>
            <input id="command" type="text" className="h-4 min-w-0 flex-1 bg-transparent pl-1 outline-none" />
            <div className="mr-5 flex">
              <ScrollButton dir="left" />
              <div className="ml-1 h-4 w-4 rounded-sm border border-[#9db5ea] bg-[#c5d5fc]" />
              <div className="w-3" />
              <ScrollButton dir="right" />
            </div>
          </div>
        </div>
      </section>

      <div className="mt-px h-1 shrink-0 border-b border-t border-[#aca899] bg-[#f5f4ee]" />

      <footer className="flex h-5 shrink-0 items-stretch gap-1 pl-1 pt-px text-[12px] leading-[17px]">
        <output className="w-[250px] border border-b-white border-l-[#aca899] border-r-white border-t-[#aca899] pl-px">1504.5659, 640.4737, 0.0000</output>
        {statusToggles.map((t) => (
          <button
            key={t.label}
            type="button"
            aria-pressed={!!t.on}
            className={`whitespace-nowrap border px-px ${
              t.on
                ? "border-b-white border-l-black border-r-white border-t-black bg-[#f4f2e8]"
                : "border-b-[#aca899] border-l-white border-r-[#aca899] border-t-white"
            }`}
          >
            {t.label}
          </button>
        ))}
        <span className="mt-[7px] h-1.5 w-[7px] bg-[#f00]" />
        <span className="flex-1" />
        <button type="button" aria-label="Status bar menu" className="mr-4 flex items-center">
          <svg viewBox="0 0 8 4" className="h-1 w-2" aria-hidden="true">
            <path d="M0 0h8L4 4z" fill="#000" />
          </svg>
        </button>
      </footer>

      <p className="absolute right-2 top-1 font-['Liberation_Mono',monospace] text-[15px] font-bold leading-[17px] text-[#e80c0c]">shaonx 2009-12-6</p>

      <div className="pointer-events-none absolute bottom-0 right-0 flex flex-col items-end text-white/50 [text-shadow:1px_1px_1px_#8888]">
        <span className="mr-1.5 text-[22px] leading-6">中国教程网</span>
        <span className="-mt-3.5 text-[36px] leading-[36px]">JcWcn.com</span>
      </div>
    </div>
  );
}
